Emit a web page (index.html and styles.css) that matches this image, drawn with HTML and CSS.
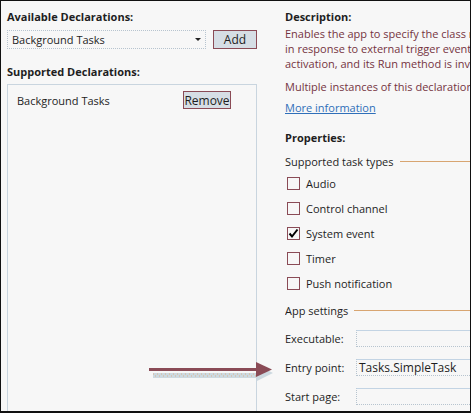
FILE: index.html
```html
<!DOCTYPE html>
<html>
<head>
<meta charset="utf-8">
<link rel="stylesheet" href="styles.css">
</head>
<body>
<div class="frame">
  <div class="left">
    <div class="heading">Available Declarations:</div>
    <div class="pick-row">
      <div class="select"><span>Background Tasks</span><span class="caret"></span></div>
      <div class="btn btn-add">Add</div>
    </div>
    <div class="heading heading-2">Supported Declarations:</div>
    <div class="list">
      <div class="item"><span>Background Tasks</span><div class="btn btn-remove">Remove</div></div>
    </div>
  </div>
  <div class="right">
    <div class="heading">Description:</div>
    <div class="desc">
      <div>Enables the app to specify the class name of a background task that runs</div>
      <div>in response to external trigger events. The class is created at the time of</div>
      <div>activation, and its Run method is invoked.</div>
    </div>
    <div class="desc desc-2">Multiple instances of this declaration are allowed in each app.</div>
    <a class="more" href="#">More information</a>
    <div class="heading heading-props">Properties:</div>
    <div class="group">Supported task types</div>
    <div class="checks">
      <div class="check"><span class="box"></span>Audio</div>
      <div class="check"><span class="box"></span>Control channel</div>
      <div class="check"><span class="box checked"><svg viewBox="0 0 11 11" width="11" height="11"><path d="M1.5 5.5 L4 8.5 L9.5 1.5" fill="none" stroke="#000" stroke-width="2"/></svg></span>System event</div>
      <div class="check"><span class="box"></span>Timer</div>
      <div class="check"><span class="box"></span>Push notification</div>
    </div>
    <div class="group group-app">App settings</div>
    <div class="fields">
      <div class="field"><span class="label">Executable:</span><div class="input"></div></div>
      <div class="field"><span class="label">Entry point:</span><div class="input">Tasks.SimpleTask</div></div>
      <div class="field"><span class="label">Start page:</span><div class="input"></div></div>
    </div>
  </div>
  <svg class="arrow" width="128" height="26" viewBox="0 0 128 26">
    <rect x="4" y="14" width="106" height="5" fill="#cdd9e0"/>
    <path d="M4 15 H110 M6 17 H110" stroke="#e0a878" stroke-width="0.8" stroke-dasharray="1 3"/>
    <path d="M108 6 L124 14 L108 22 Z" fill="#cdd9e0"/>
    <rect x="0" y="9" width="110" height="3" fill="#8a4b56"/>
    <path d="M107 3 L123 10.5 L107 18 Z" fill="#8a4b56"/>
  </svg>
</div>
</body>
</html>
```

FILE: styles.css
```css
html, body {
  margin: 0;
  padding: 0;
  background: #f7f7f7;
}
.frame {
  position: relative;
  width: 471px;
  height: 413px;
  box-sizing: border-box;
  border: 1px solid #111;
  border-bottom-width: 2px;
  background: #f7f7f7;
  display: flex;
  overflow: hidden;
  font-family: "Open Sans", "Noto Sans", sans-serif;
  font-size: 11px;
  color: #1e1e1e;
}
.left {
  width: 250px;
  margin-left: 6px;
  padding-top: 8px;
  display: flex;
  flex-direction: column;
}
.heading {
  font-weight: bold;
  line-height: 15px;
  height: 15px;
}
.pick-row {
  margin-top: 6px;
  display: flex;
  align-items: center;
  gap: 7px;
}
.select {
  width: 199px;
  height: 19px;
  box-sizing: border-box;
  border: 1px dotted #b7c4cf;
  display: flex;
  align-items: center;
  justify-content: space-between;
  padding: 0 4px 0 4px;
}
.caret {
  width: 0;
  height: 0;
  border-left: 3px solid transparent;
  border-right: 3px solid transparent;
  border-top: 3px solid #222;
}
.btn {
  box-sizing: border-box;
  height: 19px;
  border: 1px solid #8a4b56;
  background: #d6dee5;
  display: flex;
  align-items: center;
  justify-content: center;
  font-size: 12px;
}
.btn-add {
  width: 44px;
}
.heading-2 {
  margin-top: 15px;
}
.list {
  margin-top: 5px;
  flex: 1;
  border: 1px solid #c9d5df;
  border-bottom: none;
  box-sizing: border-box;
}
.item {
  display: flex;
  align-items: center;
  justify-content: space-between;
  padding: 6px 25px 0 9px;
}
.btn-remove {
  width: 48px;
  height: 18px;
}
.right {
  flex: 1;
  min-width: 0;
  margin-left: 28px;
  padding-top: 8px;
  white-space: nowrap;
  overflow: hidden;
}
.desc {
  color: #75343f;
  line-height: 15px;
  margin-top: 2px;
}
.desc-2 {
  margin-top: 8px;
}
.more {
  display: block;
  color: #2f6fb9;
  line-height: 15px;
  margin-top: 6px;
  text-decoration: underline;
}
.heading-props {
  margin-top: 15px;
}
.group {
  display: flex;
  align-items: center;
  line-height: 15px;
  height: 15px;
  margin-top: 9px;
}
.group::after {
  content: "";
  flex: 1;
  height: 1px;
  background: #d8a571;
  margin-left: 6px;
}
.checks {
  margin-top: 2px;
}
.check {
  display: flex;
  align-items: center;
  height: 25px;
  padding-left: 2px;
}
.box {
  width: 13px;
  height: 13px;
  flex: none;
  box-sizing: border-box;
  border: 1px solid #8a4b56;
  margin-right: 6px;
  display: flex;
  align-items: center;
  justify-content: center;
}
.group-app {
  margin-top: 7px;
}
.fields {
  margin-top: 6px;
}
.field {
  display: flex;
  align-items: center;
  height: 29px;
}
.label {
  width: 71px;
  flex: none;
}
.input {
  flex: 1;
  height: 17px;
  box-sizing: border-box;
  border: 1px dotted #b7c4cf;
  border-top: 1px solid #c3d4e4;
  border-right: none;
  padding-left: 2px;
  line-height: 15px;
  font-size: 12px;
}
.arrow {
  position: absolute;
  left: 148px;
  top: 358px;
}
```
